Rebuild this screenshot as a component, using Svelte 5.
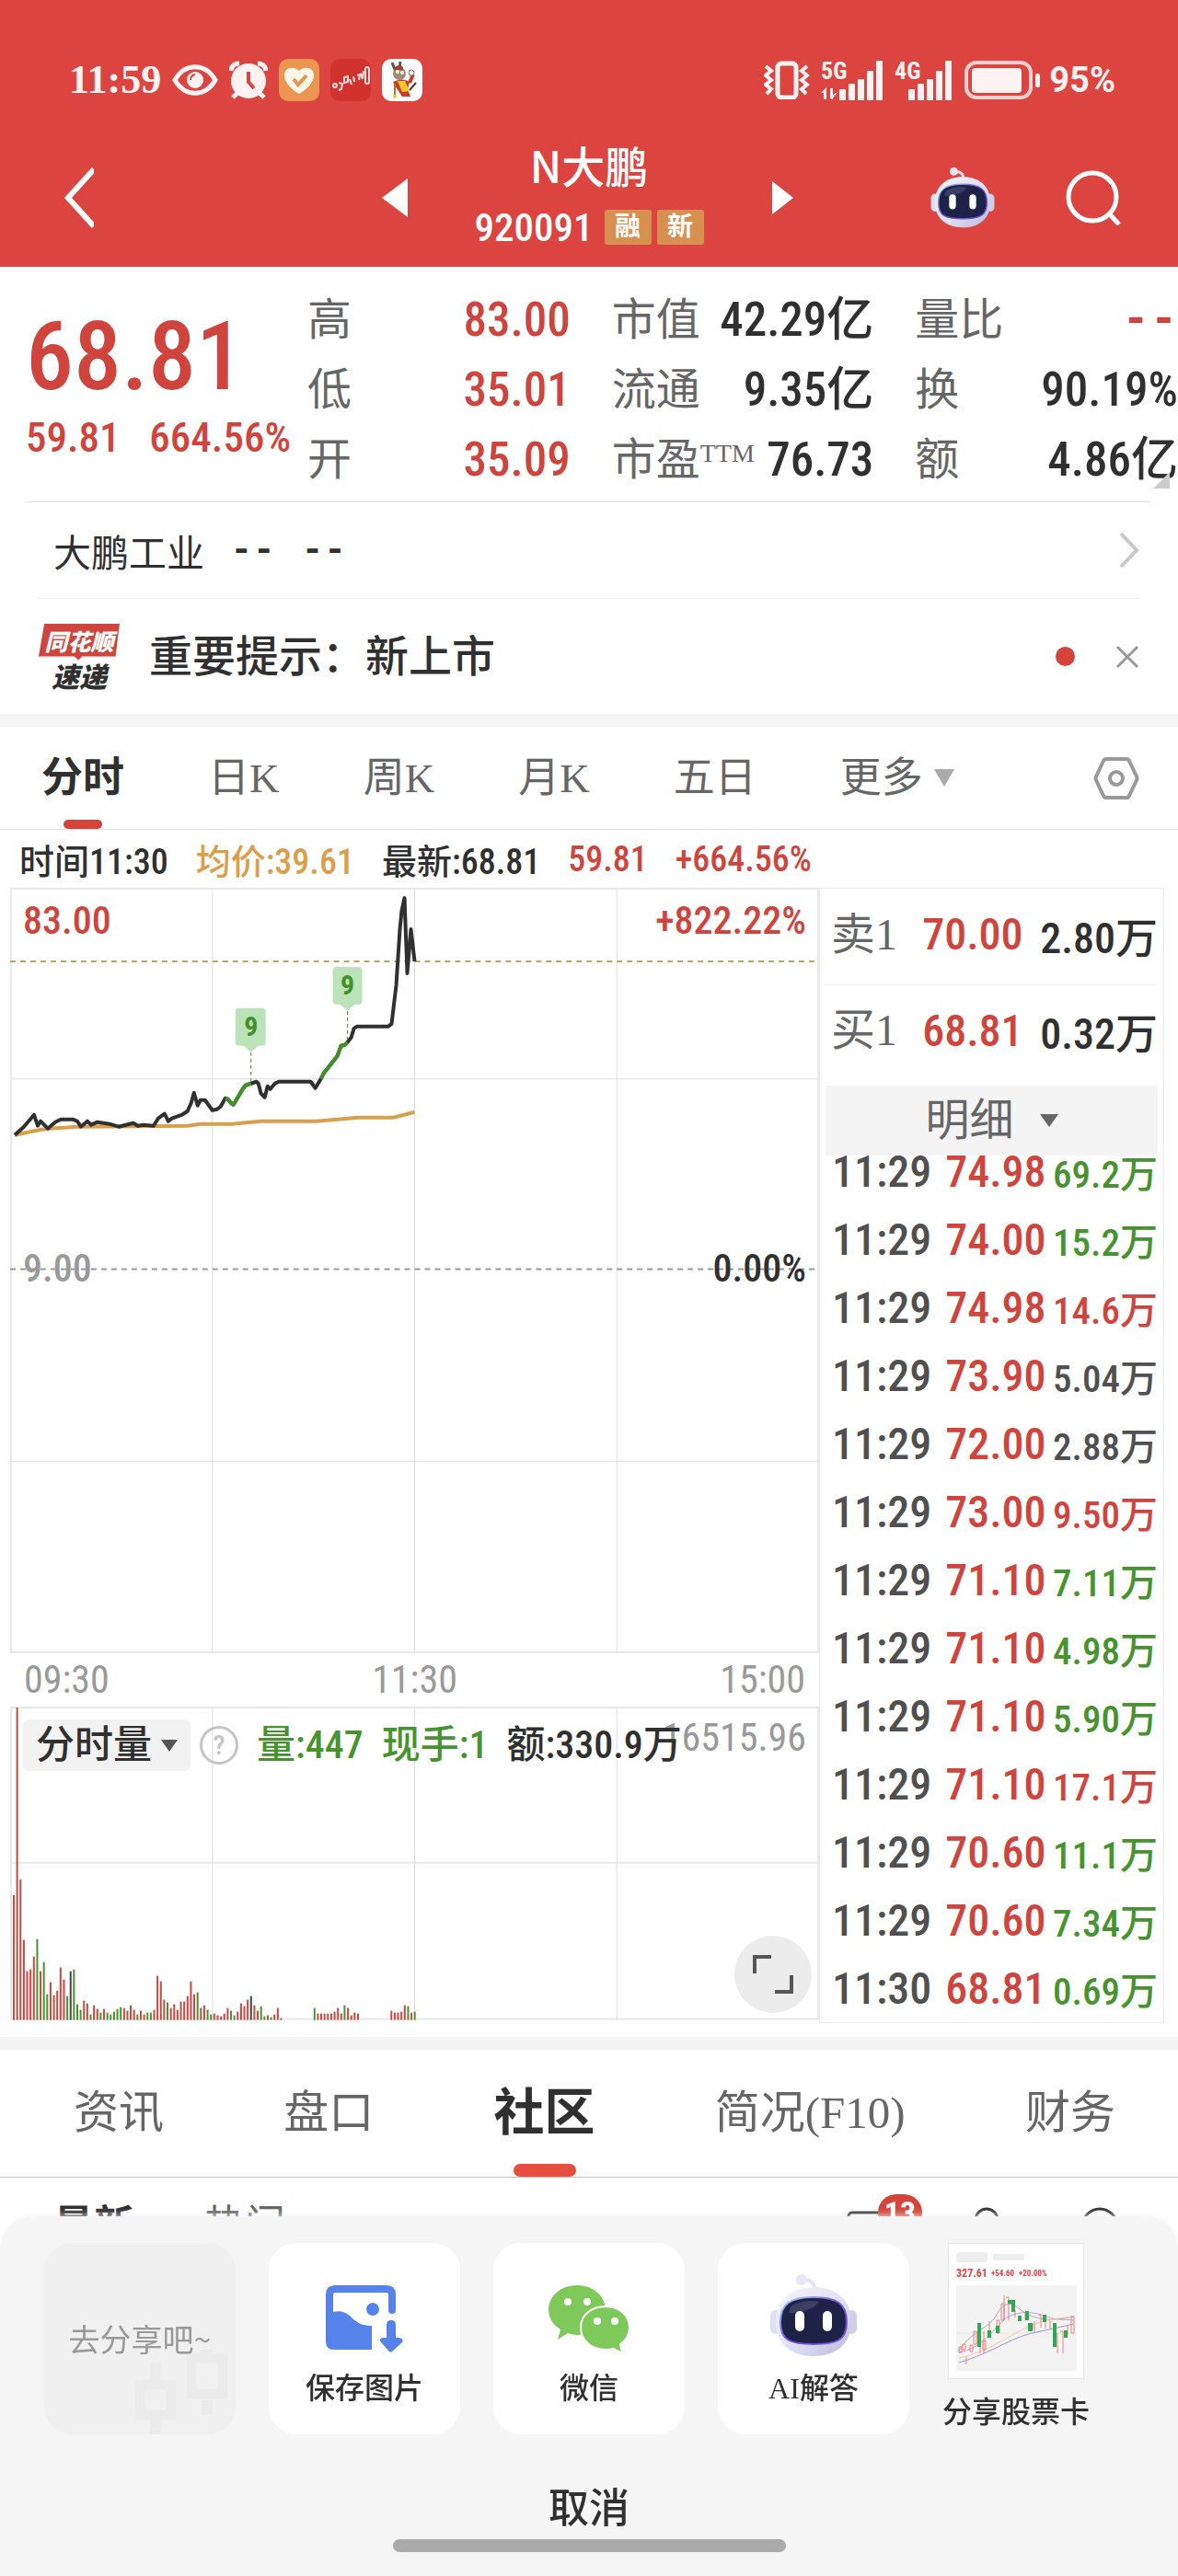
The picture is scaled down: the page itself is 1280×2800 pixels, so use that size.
<script lang="ts">
	type Tone = 'up' | 'down' | 'flat';

	let chartTab = '分时';
	let pageTab = '社区';
	let sheetOpen = true;

	const chartTabs = ['分时', '日K', '周K', '月K', '五日'];
	const pageTabs = ['资讯', '盘口', '社区', '简况(F10)', '财务'];

	const quotes = [
		[
			{ label: '高', value: '83.00', tone: 'up' },
			{ label: '市值', value: '42.29亿', tone: '' },
			{ label: '量比', value: '--', tone: 'up empty' }
		],
		[
			{ label: '低', value: '35.01', tone: 'up' },
			{ label: '流通', value: '9.35亿', tone: '' },
			{ label: '换', value: '90.19%', tone: '' }
		],
		[
			{ label: '开', value: '35.09', tone: 'up' },
			{ label: '市盈', sup: 'TTM', value: '76.73', tone: '' },
			{ label: '额', value: '4.86亿', tone: '' }
		]
	];

	const orders = [
		{ side: '卖1', price: '70.00', volume: '2.80万' },
		{ side: '买1', price: '68.81', volume: '0.32万' }
	];

	const trades: { time: string; price: string; volume: string; tone: Tone }[] = [
		{ time: '11:29', price: '74.98', volume: '69.2万', tone: 'down' },
		{ time: '11:29', price: '74.00', volume: '15.2万', tone: 'down' },
		{ time: '11:29', price: '74.98', volume: '14.6万', tone: 'up' },
		{ time: '11:29', price: '73.90', volume: '5.04万', tone: 'flat' },
		{ time: '11:29', price: '72.00', volume: '2.88万', tone: 'flat' },
		{ time: '11:29', price: '73.00', volume: '9.50万', tone: 'up' },
		{ time: '11:29', price: '71.10', volume: '7.11万', tone: 'down' },
		{ time: '11:29', price: '71.10', volume: '4.98万', tone: 'down' },
		{ time: '11:29', price: '71.10', volume: '5.90万', tone: 'down' },
		{ time: '11:29', price: '71.10', volume: '17.1万', tone: 'up' },
		{ time: '11:29', price: '70.60', volume: '11.1万', tone: 'down' },
		{ time: '11:29', price: '70.60', volume: '7.34万', tone: 'down' },
		{ time: '11:30', price: '68.81', volume: '0.69万', tone: 'down' }
	];

	// One entry per minute: r = up, g = down, k = unchanged
	const volumes =
		'r136 r340 r153 r87 r53 r55 r69 g88 r53 g63 g28 r41 r27 r32 r57 r44 g26 k53 g55 g17 g11 r21 r18 g6 r16 r12 g8 r12 g8 g6 g9 g12 g14 r13 r10 r16 r11 g6 r10 r6 g8 g8 r11 r48 r42 r22 g19 r13 r17 r11 r20 r20 r26 r42 r28 g30 r13 r16 g11 g6 r7 r5 r4 r7 r13 g10 g5 r9 r18 r15 r22 k26 r16 r10 g15 g4 r5 g3 r6 r13 r2 r0 r0 r0 r0 r0 r0 r0 r0 r0 g13 r7 r7 r7 r7 r7 r9 r13 r7 g16 r13 r5 r8 r7 r0 r0 r0 r0 r0 r0 r0 r0 r0 r10 r8 r8 r9 r16 g15 r8 g9'
			.split(' ')
			.map((v) => ({ color: v[0], height: Number(v.slice(1)) }));

	const barColors: Record<string, string> = { r: '#c9483f', g: '#47932f', k: '#444' };
</script>

{#snippet robot()}
	<svg viewBox="0 0 96 90" aria-hidden="true">
		<defs>
			<linearGradient id="shell" x1="0" y1="0" x2="1" y2="1">
				<stop offset="0" stop-color="#f7f7fd" />
				<stop offset="0.6" stop-color="#dcdcf2" />
				<stop offset="1" stop-color="#b9b9dc" />
			</linearGradient>
			<linearGradient id="rim" x1="0" y1="0" x2="1" y2="1">
				<stop offset="0" stop-color="#9fd3f5" />
				<stop offset="0.5" stop-color="#7a4be0" />
				<stop offset="1" stop-color="#6a55d8" />
			</linearGradient>
		</defs>
		<path d="M35 7c9-2 14 2 14 9" fill="none" stroke="#e0e0f4" stroke-width="4" />
		<circle cx="35" cy="6" r="6" fill="#e6e6f7" />
		<rect x="1" y="39" width="12" height="26" rx="6" fill="#dfdff3" />
		<rect x="83" y="39" width="12" height="26" rx="6" fill="#cfcfe9" />
		<path d="M48 14c25 0 41 14 41 38S72 89 48 89 7 76 7 52s16-38 41-38z" fill="url(#shell)" />
		<path
			d="M48 25c25 0 36 7 36 27S73 76 48 76 12 72 12 52s11-27 36-27z"
			fill="#1d2247"
			stroke="url(#rim)"
			stroke-width="2"
		/>
		<path d="M23 35c9-6 23-7 31-5-5 8-22 13-33 12z" fill="#3a3f63" />
		<rect x="28" y="40" width="10" height="22" rx="5" fill="#fff" />
		<rect x="58" y="40" width="10" height="22" rx="5" fill="#fff" />
	</svg>
{/snippet}

<div class="page">
	<header>
		<div class="status">
			<span class="clock">11:59</span>
			<svg width="50" height="34" viewBox="0 0 50 34">
				<path
					d="M3 17C14-2 36-2 47 17 36 36 14 36 3 17z"
					fill="none"
					stroke="#fff2f2"
					stroke-width="5"
				/>
				<circle cx="25" cy="17" r="9" fill="#fff2f2" />
				<path d="M20 17q0-5 5-6" fill="none" stroke="#dc443f" stroke-width="2" />
			</svg>
			<svg width="42" height="42" viewBox="0 0 42 42">
				<circle cx="21" cy="22" r="19" fill="#fff2f2" />
				<path
					d="M2 11q1-8 9-8M40 11q-1-8-9-8M9 35l-5 5M33 35l5 5"
					fill="none"
					stroke="#fff2f2"
					stroke-width="5"
				/>
				<path d="M21 12v11l6 7" fill="none" stroke="#dc443f" stroke-width="4" />
			</svg>
			<svg width="44" height="46" viewBox="0 0 44 46">
				<rect width="44" height="46" rx="10" fill="#eb9650" />
				<path
					d="M22 38C13 33 6 25 6 18c0-8 9-11 16-5 7-6 16-3 16 5 0 7-7 15-16 20z"
					fill="#fff6ea"
				/>
				<path d="M16 22l5 6 9-10" fill="none" stroke="#eb9650" stroke-width="4" />
			</svg>
			<svg width="44" height="46" viewBox="0 0 44 46">
				<rect width="44" height="46" rx="10" fill="#d2322d" />
				<g fill="none" stroke="#ffdcdc" stroke-width="2">
					<circle cx="5" cy="29" r="2" />
					<path d="M9 26l4 1-1 6-3 1M15 20l4-1v6l-4 1zM21 22l2 6M25 19l1 6M29 18l3-1-1 6M33 16l2 6 1-9" />
					<rect x="38" y="9" width="4" height="18" rx="2" />
				</g>
			</svg>
			<svg width="44" height="46" viewBox="0 0 44 46">
				<rect width="44" height="46" rx="10" fill="#fff" />
				<path d="M11 4l4 10M20 3l-1 10" stroke="#555" stroke-width="3" />
				<ellipse cx="19" cy="16" rx="7" ry="7" fill="#a08a70" />
				<path d="M14 9q5-4 9 0v3h-9z" fill="#a5402b" />
				<circle cx="17" cy="14" r="2" fill="#fff" /><circle cx="22" cy="15" r="2" fill="#fff" />
				<path d="M12 25q10-5 18 0l-2 8 3 8h-9l-6-9z" fill="#cf3a22" />
				<path d="M17 24l5 12 8-1-5-11z" fill="#f0c92e" />
				<path d="M30 26l4-9" stroke="#cf3a22" stroke-width="4" />
				<circle cx="32" cy="15" r="3" fill="#fff" stroke="#777" />
				<path d="M14 27v14" stroke="#a8752b" stroke-width="2" />
				<circle cx="14" cy="41" r="2" fill="#f0c92e" />
				<path d="M30 34l7-8" stroke="#65342c" stroke-width="2" />
			</svg>
			<span class="spacer"></span>
			<svg width="50" height="42" viewBox="0 0 50 42" fill="none" stroke="#fff2f2">
				<rect x="15" y="3" width="20" height="37" rx="4" stroke-width="5" />
				<path
					d="M2 6l6 5-6 5 6 5-6 5 6 5-5 5M47 6l-6 5 6 5-6 5 6 5-6 5 5 5"
					stroke-width="4"
				/>
			</svg>
			<svg class="signal" width="68" height="54" viewBox="0 -5 68 54" fill="#fff2f2">
				<text x="0" y="21" font-size="26">5G</text>
				<path d="M0 36l6-6v13H3v-7zM10 31h3v12l-3-1zM13 38l5-3-5 7z" />
				<rect x="20" y="32" width="7" height="12" rx="1" />
				<rect x="30" y="26" width="7" height="18" rx="1" />
				<rect x="40" y="21" width="7" height="23" rx="1" />
				<rect x="50" y="12" width="7" height="32" rx="1" />
				<rect x="60" y="1" width="7" height="43" rx="1" />
			</svg>
			<svg class="signal" width="64" height="54" viewBox="0 -5 64 54" fill="#fff2f2">
				<text x="0" y="21" font-size="26">4G</text>
				<rect x="15" y="32" width="7" height="12" rx="1" />
				<rect x="25" y="26" width="7" height="18" rx="1" />
				<rect x="35" y="21" width="7" height="23" rx="1" />
				<rect x="45" y="12" width="7" height="32" rx="1" />
				<rect x="55" y="1" width="7" height="43" rx="1" />
			</svg>
			<svg width="84" height="44" viewBox="0 0 84 44">
				<rect
					x="2"
					y="3"
					width="70"
					height="38"
					rx="11"
					fill="none"
					stroke="#f9cfcd"
					stroke-width="4"
				/>
				<rect x="8" y="9" width="54" height="27" rx="4" fill="#fff2f2" />
				<rect x="77" y="15" width="5" height="15" rx="2" fill="#fff2f2" />
			</svg>
			<span class="percent">95%</span>
		</div>

		<div class="nav">
			<button class="back" aria-label="返回">
				<svg width="40" height="66" viewBox="0 0 40 66">
					<path d="M40 2L12 33l28 31" fill="none" stroke="#fff" stroke-width="6" />
				</svg>
			</button>
			<button aria-label="上一只">
				<svg width="28" height="44" viewBox="0 0 28 44"><path d="M28 1v42L0 22z" fill="#fff" /></svg>
			</button>
			<div class="stock">
				<h1>N大鹏</h1>
				<p><span class="code">920091</span><i>融</i><i>新</i></p>
			</div>
			<button aria-label="下一只">
				<svg width="28" height="44" viewBox="0 0 28 44"><path d="M2 4v36l23-18z" fill="#fff" /></svg>
			</button>
			<div class="tools">
				<button class="bot" aria-label="AI助手">{@render robot()}</button>
				<button aria-label="搜索">
					<svg width="60" height="60" viewBox="0 0 60 60" fill="none" stroke="#fff" stroke-width="5">
						<circle cx="29" cy="29" r="26" /><path d="M47 47l11 12" />
					</svg>
				</button>
			</div>
		</div>
	</header>

	<section class="quote">
		<div class="price">
			<strong>68.81</strong>
			<p><span>59.81</span><span>664.56%</span></p>
		</div>
		<dl>
			{#each quotes as row}
				{#each row as item}
					<div>
						<dt>{item.label}{#if item.sup}<sup>{item.sup}</sup>{/if}</dt>
						<dd class={item.tone}>{item.value}</dd>
					</div>
				{/each}
			{/each}
		</dl>
		<svg class="corner" width="18" height="18" viewBox="0 0 18 18">
			<path d="M18 0v18H0z" fill="#ccc" />
		</svg>
	</section>

	<a class="company" href="#company">
		<span>大鹏工业</span><span class="empty">--</span><span class="empty">--</span>
		<svg width="22" height="40" viewBox="0 0 22 40">
			<path d="M2 2l17 18L2 38" fill="none" stroke="#c8c8c8" stroke-width="4" />
		</svg>
	</a>

	<div class="news">
		<div class="brand"><b>同花顺</b><em>速递</em></div>
		<a href="#news">重要提示：新上市</a>
		<span class="dot"></span>
		<button aria-label="关闭">
			<svg width="26" height="26" viewBox="0 0 26 26">
				<path d="M2 2l22 22M24 2L2 24" stroke="#999" stroke-width="3" />
			</svg>
		</button>
	</div>

	<nav class="chart-tabs">
		{#each chartTabs as tab}
			<button class:active={chartTab === tab} on:click={() => (chartTab = tab)}>{tab}</button>
		{/each}
		<button class="more">
			更多
			<svg width="22" height="20" viewBox="0 0 22 20"><path d="M0 0h22L11 19z" fill="#aaa" /></svg>
		</button>
		<button class="settings" aria-label="设置">
			<svg width="50" height="48" viewBox="0 0 50 48" fill="none" stroke="#999" stroke-width="4">
				<path d="M14 3h22q2 0 3 2l8 17q1 2 0 4l-8 17q-1 2-3 2H14q-2 0-3-2L3 26q-1-2 0-4l8-17q1-2 3-2z" />
				<circle cx="25" cy="24" r="7" />
			</svg>
		</button>
	</nav>

	<div class="summary">
		<span>时间11:30</span>
		<span class="average">均价:39.61</span>
		<span>最新:68.81</span>
		<span class="up">59.81</span>
		<span class="up">+664.56%</span>
	</div>

	<section class="market">
		<div class="charts">
			<div class="plot">
				<svg viewBox="0 0 880 833" fill="none">
					<path d="M220 0v833M440 0v833M660 0v833M0 208h880M0 624h880" stroke="#ddd" />
					<rect x="1" y="1" width="878" height="831" stroke="#e8e8e8" stroke-width="2" />
					<path d="M0 80h880" stroke="#b9a46c" stroke-width="2" stroke-dasharray="6 5" />
					<path d="M0 415h880" stroke="#999" stroke-width="2" stroke-dasharray="6 5" />
					<polyline
						stroke="#d8a04c"
						stroke-width="4"
						points="5,269 29,264 41,262 58,261 73,260 193,259 207,257 242,257 273,254 333,254 356,252 379,250 417,250 440,244"
					/>
					<polyline
						stroke="#303030"
						stroke-width="4"
						stroke-linejoin="round"
						points="5,269 15,260 26,247 30,259 33,254 41,262 49,255 55,252 68,252 73,254 77,260 84,254 88,258 95,255 108,257 118,260 134,256 139,259 145,258 156,259 161,251 168,246 172,254 176,251 187,247 193,243 197,234 200,223 204,237 207,231 212,231 220,242 225,241 229,238 234,229 237,230 240,234 243,236 253,219 256,215 262,213 268,211 270,213 273,224 277,228 280,216 283,219 288,213 292,211 327,211 332,218 338,208 341,202 356,183 360,172 364,171 367,168 371,163 374,153 377,151 411,151 415,148 420,106 424,45 426,25 429,11 432,93 436,45 440,80"
					/>
					<g stroke="#409128" stroke-width="4" stroke-linejoin="round">
						<polyline points="234,229 237,230 240,234 243,236 253,219 256,215 262,213" />
						<polyline points="338,208 341,202 356,183 360,172 364,171 367,168" />
					</g>
					<path d="M262 179v34M367 134v34" stroke="#409128" stroke-dasharray="4 3" />
					<g fill="#bce2b9">
						<path d="M249 131h25q4 0 4 4v33q0 4-4 4h-4l-8 7-8-7h-5q-4 0-4-4v-33q0-4 4-4z" />
						<path d="M355 86h24q4 0 4 4v33q0 4-4 4h-4l-8 7-8-7h-4q-4 0-4-4V90q0-4 4-4z" />
					</g>
					<g fill="#409128" class="marker" text-anchor="middle">
						<text x="262" y="161">9</text>
						<text x="367" y="116">9</text>
					</g>
				</svg>
				<span class="label top left up">83.00</span>
				<span class="label top right up">+822.22%</span>
				<span class="label middle left muted">9.00</span>
				<span class="label middle right">0.00%</span>
			</div>

			<div class="hours"><span>09:30</span><span>11:30</span><span>15:00</span></div>

			<div class="plot">
				<svg viewBox="0 0 880 341" fill="none">
					<path d="M220 0v341M440 0v341M660 0v341" stroke="#ddd" />
					<path d="M0 170h880" stroke="#e8e8e8" stroke-width="2" />
					<rect x="1" y="1" width="878" height="339" stroke="#e8e8e8" stroke-width="2" />
					{#each volumes as bar, i}
						<rect
							x={3 + i * 3.635}
							y={341 - bar.height}
							width="2"
							height={bar.height}
							fill={barColors[bar.color]}
						/>
					{/each}
				</svg>
				<span class="peak">16515.96</span>
				<div class="indicator">
					<button>
						分时量
						<svg width="18" height="13" viewBox="0 0 18 13"><path d="M0 0h18L9 13z" fill="#555" /></svg>
					</button>
					<span class="help">?</span>
					<span class="down">量:447</span>
					<span class="down">现手:1</span>
					<span>额:330.9万</span>
				</div>
				<button class="expand" aria-label="全屏">
					<svg width="44" height="44" viewBox="0 0 44 44" fill="none" stroke="#555" stroke-width="4">
						<path d="M2 21V3h18M42 23v18H24" />
					</svg>
				</button>
			</div>
		</div>

		<aside>
			<table class="orders">
				<tbody>
					{#each orders as order}
						<tr>
							<th>{order.side}</th>
							<td class="up">{order.price}</td>
							<td>{order.volume}</td>
						</tr>
					{/each}
				</tbody>
			</table>
			<button class="detail">
				明细
				<svg width="20" height="14" viewBox="0 0 20 14"><path d="M0 0h20L10 14z" fill="#666" /></svg>
			</button>
			<table class="trades">
				<tbody>
					{#each trades as trade}
						<tr>
							<td>{trade.time}</td>
							<td class="up">{trade.price}</td>
							<td class={trade.tone}>{trade.volume}</td>
						</tr>
					{/each}
				</tbody>
			</table>
		</aside>
	</section>

	<nav class="page-tabs">
		{#each pageTabs as tab}
			<button class:active={pageTab === tab} on:click={() => (pageTab = tab)}>{tab}</button>
		{/each}
	</nav>

	<div class="feed">
		<b>最新</b>
		<span>热门</span>
		<div class="feed-tools">
			<div class="inbox">
				<svg width="50" height="40" viewBox="0 0 50 40">
					<rect x="2" y="2" width="46" height="36" rx="4" fill="none" stroke="#333" stroke-width="3" />
				</svg>
				<i>13</i>
			</div>
			<svg width="44" height="44" viewBox="0 0 44 44" fill="none" stroke="#333" stroke-width="3">
				<circle cx="22" cy="14" r="12" /><path d="M2 44q2-16 20-16t20 16" />
			</svg>
			<svg width="44" height="44" viewBox="0 0 44 44" fill="none" stroke="#333" stroke-width="3">
				<circle cx="21" cy="21" r="19" /><path d="M34 35l8 8" />
			</svg>
		</div>
	</div>
</div>

{#if sheetOpen}
	<div class="sheet">
		<div class="options">
			<div class="option hint">
				<svg width="102" height="92" viewBox="0 0 102 92" fill="none" stroke="#ebebeb">
					<path d="M23 14v19M23 71v21M79 0v13M79 55v16" stroke-width="12" />
					<path d="M6 38h34v33H6zM62 9h34v39H62z" stroke-width="11" />
				</svg>
				<span>去分享吧~</span>
			</div>
			<button class="option">
				<svg width="96" height="90" viewBox="0 0 96 90">
					<path
						d="M10 72V22q0-6 6-6h56q6 0 6 6v17"
						fill="none"
						stroke="#5683e9"
						stroke-width="8"
						stroke-linecap="round"
					/>
					<path
						d="M8 44c12-7 20-3 26 3 7 7 13 9 22 9v26H15q-9 0-9-9z"
						fill="#5683e9"
					/>
					<circle cx="57" cy="38" r="7" fill="#5683e9" />
					<path
						d="M77 50q5 0 5 5v14h4q5 1 3 5L78 84q-1 1-3 0L66 74q-3-4 2-5h4V55q0-5 5-5z"
						fill="#5683e9"
					/>
				</svg>
				保存图片
			</button>
			<button class="option">
				<svg width="96" height="90" viewBox="0 0 96 90">
					<path
						d="M35 12c18 0 31 12 31 27S53 66 35 66q-5 0-10-2l-11 7 3-11Q4 52 4 39c0-15 13-27 31-27z"
						fill="#7dca5b"
					/>
					<circle cx="25" cy="30" r="4" fill="#fff" /><circle cx="46" cy="30" r="4" fill="#fff" />
					<path
						d="M66 35c15 0 26 10 26 23q0 11-10 18l2 10-9-5q-4 1-9 1c-15 0-27-10-27-24s12-23 27-23z"
						fill="#7dca5b"
						stroke="#fff"
						stroke-width="2"
					/>
					<circle cx="57" cy="51" r="4" fill="#fff" /><circle cx="76" cy="51" r="4" fill="#fff" />
				</svg>
				微信
			</button>
			<button class="option ai">{@render robot()}AI解答</button>
			<button class="card">
				<svg width="148" height="148" viewBox="0 0 148 148">
					<rect x="0" y="0" width="148" height="148" fill="#fff" stroke="#e4e4e4" stroke-width="2" />
					<rect x="9" y="10" width="34" height="11" rx="3" fill="#eee" />
					<rect x="49" y="12" width="34" height="7" fill="#eee" />
					<g class="card-text" fill="#e0454c">
						<text x="9" y="37" font-size="12">327.61</text>
						<text x="47" y="36" font-size="9">+54.60</text>
						<text x="77" y="36" font-size="9">+20.00%</text>
					</g>
					<rect x="9" y="46" width="131" height="93" fill="#f3f3f3" />
					<path d="M9 98h131" stroke="#e6e6e6" />
					<g fill="none">
						<path d="M12 117c16-24 32-22 42-41 7-12 16-12 24-4 16 12 34 14 58 8" stroke="#aaa" />
						<path d="M12 119c24-4 34-22 52-38 16-9 34-5 46 0 10 3 18 2 26 3" stroke="#c79be0" />
						<path d="M12 125c36-8 52-24 76-34 14-7 30-9 48-11" stroke="#f3cd93" />
						<path d="M12 130c40-12 52-26 84-33 14-3 28-6 40-9" stroke="#9b93cf" />
						<path
							d="M12 113h3v6h-3zM16 110h3v6h-3zM20 124v8M24 111h3v7h-3zM28 96h3v14h-3zM35 112v8M39 96v24M38 106h3v10h-3zM45 85v18M53 84h3v14h-3zM58 66h3v18h-3zM61 57v27M63 59h3v25M73 73v8M84 76v8M89 88h3v6h-3zM94 85v12M98 78h3v14M106 85v8M111 84v10M119 98v22M122 96h3v24M130 90v10M134 80h3v18h-3z"
							stroke="#ec8080"
						/>
					</g>
					<path
						d="M32 87h4v26h-4zM43 95h4v8h-4zM52 90h4v8h-4zM65 62h8v4h-8zM69 62h4v13h-4zM76 79h4v6h-4zM84 74h4v10h-4zM87 87h5v9h-5zM103 78h4v8h-4zM114 87h4v26h-4zM126 95h4v8h-4z"
						fill="#32a852"
					/>
				</svg>
				分享股票卡
			</button>
		</div>
		<button class="cancel" on:click={() => (sheetOpen = false)}>取消</button>
		<div class="home"></div>
	</div>
{/if}

<style>
	:global(body) {
		background: #fff;
	}

	.page,
	.sheet {
		--num: 'Roboto Condensed', 'Liberation Sans Narrow', Roboto, 'Noto Sans CJK SC', sans-serif;
		--kai: 'Liberation Serif', 'Noto Sans CJK SC', serif;
		--red: #cf453d;
		font-family: var(--num);
		color: #303030;
	}

	button {
		font: inherit;
		color: inherit;
		background: none;
		border: none;
		padding: 0;
		cursor: pointer;
	}

	a {
		color: inherit;
		text-decoration: none;
	}

	svg {
		display: block;
		flex: none;
	}

	h1,
	p,
	dl,
	dd {
		margin: 0;
	}

	i,
	em {
		font-style: normal;
	}

	.up {
		color: var(--red);
	}

	.down {
		color: #47932f;
	}

	header {
		background: #dc443f;
		color: #fff;
		height: 290px;
		box-sizing: border-box;
		padding-top: 60px;
	}

	.status {
		display: flex;
		align-items: center;
		gap: 12px;
		height: 54px;
		padding: 0 68px 0 75px;
		color: #fff2f2;
	}

	.clock {
		font: bold 44px/54px 'Liberation Serif', serif;
	}

	.spacer {
		flex: 1;
	}

	.signal {
		font-family: var(--num);
		font-weight: bold;
	}

	.percent {
		font: bold 38px/54px Roboto, sans-serif;
		margin-left: -4px;
	}

	.nav {
		display: grid;
		grid-template-columns: 1fr 28px 394px 28px 1fr;
		align-items: center;
		padding: 26px 62px 0;
		height: 150px;
	}

	.back {
		justify-self: start;
	}

	.stock {
		text-align: center;
	}

	h1 {
		font: 500 47px/64px 'Noto Sans CJK SC', sans-serif;
	}

	.stock p {
		display: flex;
		justify-content: center;
		align-items: center;
		gap: 6px;
		height: 72px;
	}

	.code {
		font-size: 43px;
		font-weight: 500;
		margin-right: 6px;
	}

	.stock i {
		background: #d89050;
		border-radius: 3px;
		width: 51px;
		font: bold 28px/38px var(--kai);
	}

	.tools {
		display: flex;
		justify-content: flex-end;
		align-items: center;
		gap: 76px;
	}

	.bot :global(svg) {
		width: 72px;
		height: 66px;
	}

	.quote {
		display: flex;
		position: relative;
		height: 256px;
		margin-left: 28px;
		color: var(--red);
	}

	.quote::after {
		content: '';
		position: absolute;
		left: 0;
		right: 30px;
		bottom: 0;
		border-bottom: 1px solid #ddd;
	}

	.price {
		width: 306px;
		padding-top: 40px;
		box-sizing: border-box;
	}

	.price strong {
		display: block;
		font-size: 104px;
		font-weight: 500;
		line-height: 116px;
	}

	.price p {
		display: flex;
		justify-content: space-between;
		font-size: 45px;
		font-weight: 500;
		line-height: 60px;
		padding-right: 18px;
	}

	dl {
		flex: 1;
		display: grid;
		grid-template-columns: 285fr 284fr 285fr;
		grid-auto-rows: 76px;
		column-gap: 45px;
		padding-top: 20px;
		line-height: 76px;
	}

	dl div {
		display: flex;
		justify-content: space-between;
		white-space: nowrap;
	}

	dt {
		font-family: var(--kai);
		font-size: 48px;
		color: #666;
	}

	sup {
		font-size: 28px;
		line-height: 0;
		vertical-align: 14px;
	}

	dd {
		font-size: 51px;
		font-weight: 500;
		color: #303030;
	}

	dd.up {
		color: var(--red);
	}

	.empty {
		font-family: 'Liberation Mono', monospace;
		font-weight: bold;
	}

	.corner {
		position: absolute;
		right: 9px;
		bottom: 15px;
	}

	.company {
		display: flex;
		align-items: center;
		gap: 28px;
		font-size: 41px;
		height: 104px;
		margin: 0 42px;
		padding-left: 16px;
		border-bottom: 1px solid #eee;
	}

	.company svg {
		margin-left: auto;
	}

	.news {
		display: flex;
		align-items: center;
		height: 125px;
		padding: 0 42px;
		border-bottom: 14px solid #f4f4f4;
	}

	.news a {
		flex: 1;
		margin-left: 32px;
		font: 500 47px/60px var(--kai);
	}

	.brand {
		width: 88px;
		text-align: center;
		font: italic 900 30px/32px 'Noto Sans CJK SC', sans-serif;
	}

	.brand b {
		display: block;
		padding-bottom: 4px;
		background: var(--red);
		clip-path: polygon(7% 0, 100% 0, 95% 90%, 54% 90%, 49% 100%, 44% 90%, 0 90%);
		color: #fff;
		font-size: 25px;
		line-height: 36px;
	}

	.brand em {
		font-style: italic;
	}

	.dot {
		width: 21px;
		height: 21px;
		border-radius: 50%;
		background: #d5433a;
		margin-right: 44px;
	}

	.chart-tabs {
		display: flex;
		align-items: center;
		justify-content: space-between;
		height: 111px;
		padding: 0 42px 0 45px;
		border-bottom: 1px solid #e2e2e2;
		font: 45px/60px var(--kai);
		color: #666;
	}

	.chart-tabs button {
		position: relative;
		height: 111px;
	}

	.active {
		font-weight: bold;
		color: #303030;
	}

	.active::after {
		content: '';
		position: absolute;
		left: 50%;
		bottom: 0;
		width: 42px;
		height: 10px;
		margin-left: -21px;
		border-radius: 5px;
		background: #d5433a;
	}

	.chart-tabs .more {
		display: flex;
		align-items: center;
		gap: 12px;
	}

	.settings {
		margin-left: 60px;
	}

	.summary {
		display: flex;
		align-items: center;
		gap: 30px;
		height: 63px;
		padding-left: 21px;
		font-size: 38px;
		font-weight: 500;
		white-space: nowrap;
	}

	.average {
		color: #d8a04c;
	}

	.market {
		display: grid;
		grid-template-columns: 1fr 375px;
		padding: 0 15px 15px 11px;
		border-bottom: 14px solid #f4f4f4;
	}

	.plot {
		position: relative;
		font-size: 42px;
		font-weight: 500;
	}

	.plot > svg {
		width: 100%;
		height: auto;
	}

	.marker {
		font-size: 30px;
		font-weight: bold;
	}

	.label,
	.peak {
		position: absolute;
		line-height: 48px;
	}

	.top {
		top: 12px;
	}

	.middle {
		top: 390px;
	}

	.left {
		left: 14px;
	}

	.right {
		right: 14px;
	}

	.muted,
	.peak,
	.hours {
		color: #999;
	}

	.hours {
		display: flex;
		justify-content: space-between;
		padding: 0 15px;
		font-size: 42px;
		line-height: 58px;
	}

	.peak {
		top: 10px;
		right: 14px;
		font-weight: normal;
	}

	.indicator {
		position: absolute;
		top: 14px;
		left: 14px;
		display: flex;
		align-items: center;
		gap: 20px;
		font-size: 42px;
		line-height: 56px;
		white-space: nowrap;
	}

	.indicator button {
		display: flex;
		align-items: center;
		gap: 10px;
		padding: 0 14px;
		border-radius: 6px;
		background: #f2f2f2;
	}

	.help {
		width: 36px;
		height: 36px;
		margin-left: -10px;
		border: 3px solid #c4c4c4;
		border-radius: 50%;
		color: #c4c4c4;
		font-size: 30px;
		line-height: 36px;
		text-align: center;
	}

	.expand {
		position: absolute;
		right: 8px;
		bottom: 8px;
		display: flex;
		align-items: center;
		justify-content: center;
		width: 84px;
		height: 84px;
		border-radius: 50%;
		background: #ececec;
	}

	aside {
		border: 1px solid #eaeaea;
		padding: 0 6px;
		box-sizing: border-box;
		overflow: hidden;
	}

	table {
		width: 100%;
		border-collapse: collapse;
		white-space: nowrap;
	}

	td,
	th {
		padding: 0;
		font-size: 48px;
		text-align: right;
	}

	.orders tr {
		height: 104px;
	}

	.orders tr + tr {
		border-top: 1px solid #eee;
	}

	.orders th,
	.orders td {
		padding-bottom: 4px;
	}

	.orders td:last-child {
		font-size: 46px;
	}

	th {
		padding-left: 6px;
		font: 48px/60px var(--kai);
		color: #666;
		text-align: left;
	}

	.orders td,
	.trades td {
		font-weight: 500;
	}

	.detail {
		position: relative;
		display: flex;
		align-items: center;
		justify-content: center;
		gap: 28px;
		width: 100%;
		height: 76px;
		margin-top: 6px;
		background: #f4f4f4;
		color: #666;
		font: 48px/76px var(--kai);
	}

	.trades {
		margin-top: -20px;
		color: #505050;
	}

	.trades tr {
		height: 74px;
	}

	.trades td:first-child {
		padding-left: 7px;
		text-align: left;
	}

	.trades td:last-child {
		font-size: 41px;
	}

	.page-tabs {
		display: flex;
		justify-content: space-between;
		height: 138px;
		padding: 0 68px 0 80px;
		border-bottom: 1px solid #c4c4c4;
		font: 49px/138px var(--kai);
		color: #666;
	}

	.page-tabs button {
		position: relative;
	}

	.page-tabs .active {
		font-size: 55px;
	}

	.page-tabs .active::after {
		width: 68px;
		height: 14px;
		margin-left: -34px;
		border-radius: 7px;
		background: #e64e3f;
	}

	.feed {
		display: flex;
		align-items: flex-start;
		gap: 76px;
		padding: 20px 62px 0 58px;
		font: 44px/56px 'Noto Sans CJK SC', sans-serif;
		color: #666;
	}

	.feed b {
		color: #303030;
	}

	.feed-tools {
		display: flex;
		gap: 80px;
		margin-left: auto;
		padding-top: 12px;
	}

	.inbox {
		position: relative;
		padding-top: 4px;
	}

	.inbox i {
		position: absolute;
		left: 34px;
		top: -14px;
		width: 48px;
		border-radius: 24px;
		background: #d5433a;
		color: #fff;
		font: bold 34px/40px var(--num);
		text-align: center;
	}

	.sheet {
		position: fixed;
		left: 0;
		right: 0;
		bottom: 0;
		box-sizing: border-box;
		padding: 29px 48px 26px;
		border-radius: 36px 36px 0 0;
		background: #f5f5f5;
		box-shadow: 0 0 8px #f5f5f5;
	}

	.options {
		display: flex;
		gap: 36px;
	}

	.option {
		display: flex;
		flex-direction: column;
		align-items: center;
		justify-content: flex-end;
		gap: 10px;
		width: 208px;
		height: 208px;
		box-sizing: border-box;
		padding-bottom: 26px;
		border-radius: 30px;
		background: #fff;
		font: 500 32px/48px var(--kai);
	}

	.hint {
		position: relative;
		justify-content: center;
		padding: 0;
		background: #f0f0f0;
		color: #999;
		font: 34px/48px 'Noto Sans CJK SC', sans-serif;
	}

	.hint svg {
		position: absolute;
		right: 8px;
		bottom: 0;
	}

	.hint span {
		position: relative;
	}

	.ai :global(svg) {
		width: 96px;
		height: 90px;
	}

	.card {
		display: flex;
		flex-direction: column;
		align-items: center;
		gap: 12px;
		font: 500 32px/48px var(--kai);
	}

	.card-text {
		font-family: var(--num);
		font-weight: bold;
	}

	.cancel {
		display: block;
		margin: 50px auto 0;
		font: 500 44px/64px var(--kai);
	}

	.home {
		width: 427px;
		height: 14px;
		margin: 0 auto;
		border-radius: 7px;
		background: #aaa;
	}
</style>
